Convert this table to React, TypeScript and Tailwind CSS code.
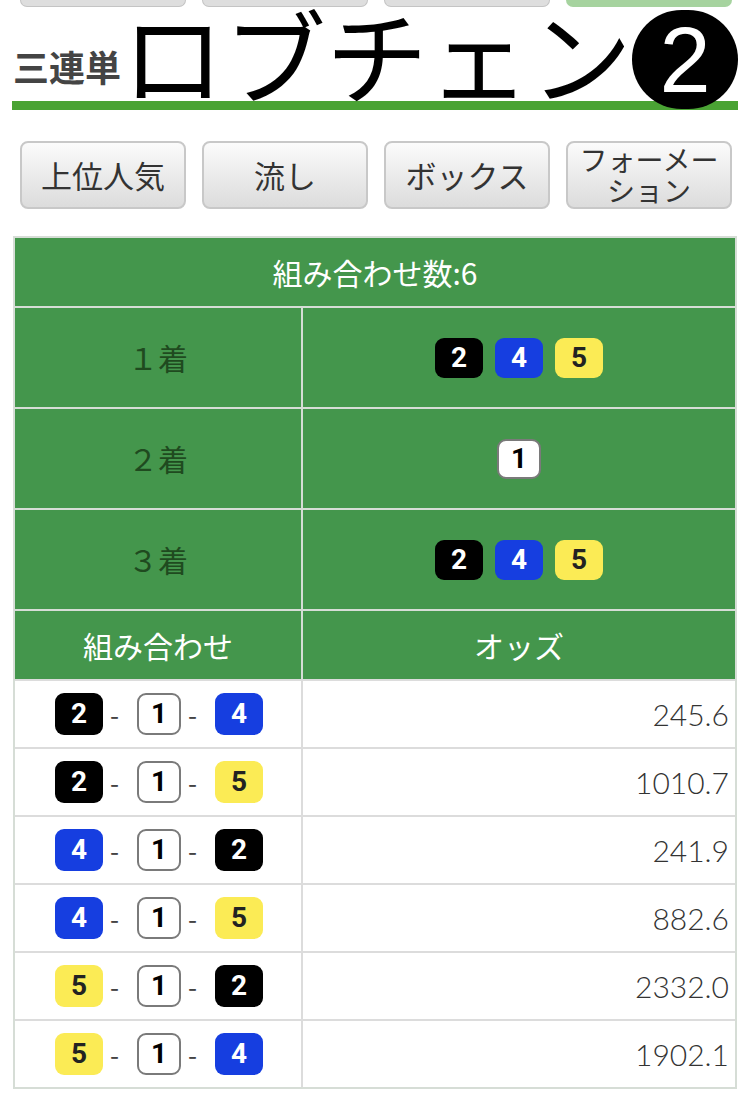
import React from 'react';

const jp = { fontFamily: '"Noto Sans CJK JP", "Noto Sans", sans-serif' };

type Num = 1 | 2 | 4 | 5;

function Badge({ n, small }: { n: Num; small?: boolean }) {
  const color =
    n === 1
      ? 'bg-white text-black border-2 border-[#7a7a7a] w-[44px]'
      : n === 2
        ? 'bg-black text-white w-[48px]'
        : n === 4
          ? 'bg-[#163ee0] text-white w-[48px]'
          : 'bg-[#fbeb55] text-[#222] w-[48px]';
  return (
    <span
      className={`inline-flex items-center justify-center rounded-[9px] text-[28px] font-bold ${small ? 'h-[40px]' : 'h-[42px]'} ${color}`}
      style={{ fontFamily: '"Roboto", "Liberation Sans", sans-serif' }}
    >
      {n}
    </span>
  );
}

function Dash() {
  return <span className="ml-[7px] mr-[18px] text-[26px] text-[#444] leading-none">-</span>;
}

const rows: { combo: [Num, Num, Num]; odds: string }[] = [
  { combo: [2, 1, 4], odds: '245.6' },
  { combo: [2, 1, 5], odds: '1010.7' },
  { combo: [4, 1, 2], odds: '241.9' },
  { combo: [4, 1, 5], odds: '882.6' },
  { combo: [5, 1, 2], odds: '2332.0' },
  { combo: [5, 1, 4], odds: '1902.1' },
];

const tabs = ['上位人気', '流し', 'ボックス'];

export default function App() {
  return (
    <div className="w-[750px] h-[1110px] bg-white overflow-hidden" style={jp}>
      {/* tabs cut off at the top */}
      <div className="flex gap-[16px] pl-[20px]">
        {[0, 1, 2].map((i) => (
          <div key={i} className="w-[166px] h-[7px] rounded-b-[8px] border-x border-b border-[#c4c4c4] bg-[#dedede]" />
        ))}
        <div className="w-[166px] h-[7px] rounded-b-[8px] bg-[#a6d39f]" />
      </div>

      <div className="mx-[12px] mt-[1px] flex h-[102px] items-start border-b-[9px] border-[#4aa334]">
        <span className="ml-[1px] mt-[40px] text-[36px] font-bold leading-none text-[#444]">三連単</span>
        <span className="ml-[1px] mt-[-6px] text-[102px] leading-none text-black">ロブチェン</span>
        <span className="relative z-10 mt-[2px] flex h-[99px] w-[106px] items-center justify-center rounded-full bg-black text-[92px] font-light leading-none text-white"
          style={{ fontFamily: '"Liberation Sans", sans-serif' }}>
          2
        </span>
      </div>

      <div className="mt-[31px] flex gap-[16px] pl-[20px]">
        {tabs.map((t) => (
          <div key={t} className="flex h-[68px] w-[166px] items-center justify-center rounded-[8px] border-2 border-[#c8c8c8] bg-gradient-to-b from-[#fbfbfb] to-[#dcdcdc] text-[31px] text-[#333]">
            {t}
          </div>
        ))}
        <div className="flex h-[68px] w-[166px] items-center justify-center rounded-[8px] border-2 border-[#c8c8c8] bg-gradient-to-b from-[#fbfbfb] to-[#dcdcdc] text-center text-[28px] leading-[31px] text-[#333]">
          <span>
            フォーメー
            <br />
            ション
          </span>
        </div>
      </div>

      <div className="mx-[13px] mt-[27px] w-[724px] border-2 border-[#d6ddd6]">
        <div className="flex h-[68px] items-center justify-center bg-[#44964c] text-[30px] text-white">組み合わせ数:6</div>
        {[
          { label: '１着', nums: [2, 4, 5] as Num[] },
          { label: '２着', nums: [1] as Num[] },
          { label: '３着', nums: [2, 4, 5] as Num[] },
        ].map((r) => (
          <div key={r.label} className="flex h-[101px] border-t-2 border-[#d6ddd6] bg-[#44964c]">
            <div className="flex w-[288px] items-center justify-center border-r-2 border-[#d6ddd6] text-[30px] text-[#1f4a1f]">
              {r.label}
            </div>
            <div className="flex flex-1 items-center justify-center gap-[12px]">
              {r.nums.map((n, i) => (
                <Badge key={i} n={n} small />
              ))}
            </div>
          </div>
        ))}
        <div className="flex h-[70px] border-t-2 border-[#d6ddd6] bg-[#44964c] text-[30px] text-white">
          <div className="flex w-[288px] items-center justify-center border-r-2 border-[#d6ddd6]">組み合わせ</div>
          <div className="flex flex-1 items-center justify-center">オッズ</div>
        </div>
        {rows.map((r) => (
          <div key={r.odds} className="flex h-[68px] border-t-2 border-[#dcdcdc] bg-white">
            <div className="flex w-[288px] items-center justify-center border-r-2 border-[#dcdcdc] pl-[2px]">
              <Badge n={r.combo[0]} />
              <Dash />
              <Badge n={r.combo[1]} />
              <Dash />
              <Badge n={r.combo[2]} />
            </div>
            <div
              className="flex flex-1 items-center justify-end pr-[6px] text-[30px] font-light text-[#333]"
              style={{ fontFamily: 'Lato, "Noto Sans", sans-serif' }}
            >
              {r.odds}
            </div>
          </div>
        ))}
      </div>
    </div>
  );
}
